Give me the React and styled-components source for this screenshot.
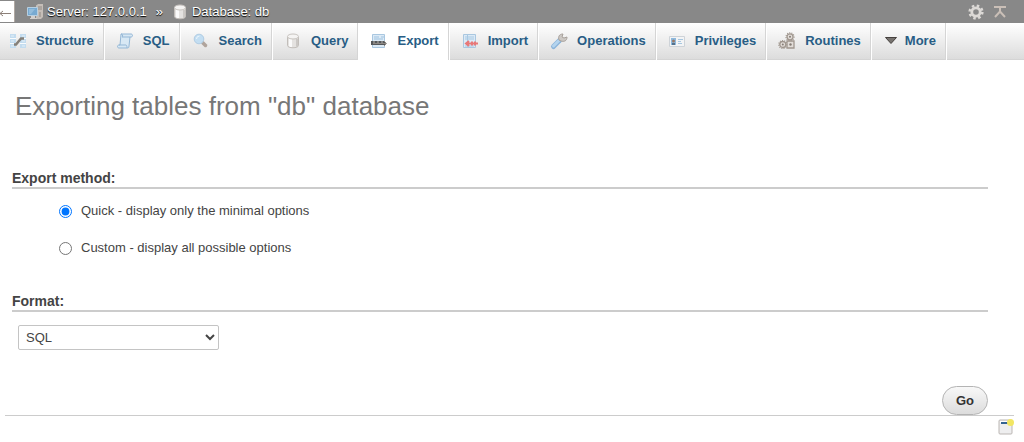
import React, { useState } from 'react';
import styled, { createGlobalStyle } from 'styled-components';

const StructureIcon = () => (
    <Icon viewBox="0 0 16 16">
        <path d="M0 1h6v14H0zM10 1h6v14h-6z" fill="#c3dcef" />
        <path d="M0 5.500h6M0 10.500h6M10 5.500h6M10 10.500h6" stroke="#f8fbfd" />
        <path d="M1 3h3M1 8h3M1 13h3M12 3h3M12 8h3M12 13h3" stroke="#e4f0f8" />
        <path d="M4 11.500h2l5-6h3" fill="none" stroke="#858079" strokeWidth="2.500" />
    </Icon>
);

const SqlIcon = () => (
    <Icon viewBox="0 0 16 16">
        <path d="M4 1h10c2 0 2 3 0 3h-1l-1 9c0 2-1 2-2 2H2c-2 0-2-3 0-3h1z" fill="#d8e8f4" stroke="#94b7d6" />
        <path d="M4 1c2 0 2 3 1 3h8M2 12h7c1 0 1 3 1 3" fill="none" stroke="#94b7d6" />
    </Icon>
);

const SearchIcon = () => (
    <Icon viewBox="0 0 16 16">
        <path d="M9.500 9.500l3 3" stroke="#b0a49c" strokeWidth="3.500" strokeLinecap="round" />
        <circle cx="6" cy="6" r="4.800" fill="#c3def2" stroke="#b0cce3" />
        <path d="M3.500 6a3 3 0 0 1 3-3" fill="none" stroke="#eef7fd" />
    </Icon>
);

const DatabaseIcon = () => (
    <Icon viewBox="0 0 16 16">
        <path d="M2.500 4v8.500c0 3 11 3 11 0V4" fill="#e4e2e0" stroke="#c2beba" />
        <path d="M4 6h3v8H5l-1-1z" fill="#fafafa" />
        <path d="M11 6h2v7l-2 1z" fill="#cbc8c5" />
        <ellipse cx="8" cy="3.500" rx="5.500" ry="2.500" fill="#f5f4f3" stroke="#c8c4c0" />
    </Icon>
);

const ExportIcon = () => (
    <Icon viewBox="0 0 16 16">
        <path d="M1.500 1.500h12v13h-12z" fill="#dceaf6" stroke="#a9c7e0" />
        <path d="M3 4h5M10 4h3M3 6h9" stroke="#9fc3e0" />
        <path d="M0 8h14v4H0z" fill="#55585b" />
        <path d="M2 10.500h13M13 8l2.500 2.500L13 13" fill="none" stroke="#8d8883" />
        <path d="M2 9h2M6 9h2M10 9h2" stroke="#b7b4b1" />
    </Icon>
);

const ImportIcon = () => (
    <Icon viewBox="0 0 16 16">
        <path d="M1.500 1.500h12v13h-12z" fill="#dceaf6" stroke="#a9c7e0" />
        <path d="M3 4h2M6 4h6M3 6h2M6 6h6M3 13h9M5.500 2v12" stroke="#a8c9e3" />
        <path d="M4 10.500h12M7 8l-3 2.500L7 13M10 8.500v4M13 8.500v4" fill="none" stroke="#e87878" strokeWidth="2" />
    </Icon>
);

const OperationsIcon = () => (
    <Icon viewBox="0 0 16 16">
        <path d="M2.500 13.500l6-6" stroke="#8bb4da" strokeWidth="5" strokeLinecap="round" />
        <path d="M2.500 13l6-6" stroke="#b4d4ee" strokeWidth="3" strokeLinecap="round" />
        <path d="M8 7c-1-3 0-6 4-6l-1 3 2 1 3-1c0 4-3 5-6 4z" fill="#ccc8c4" stroke="#a8a19b" />
    </Icon>
);

const PrivilegesIcon = () => (
    <Icon viewBox="0 0 16 16">
        <path d="M.5 3.500h15v10H.5z" fill="#f3f4f5" stroke="#ced3d8" />
        <path d="M2 5h5v7H2z" fill="#8db9de" />
        <path d="M3 12v-2h3v2z" fill="#54718c" />
        <circle cx="4.500" cy="8" r="1.500" fill="#9a7966" />
        <path d="M9 6.500h5M9 8.500h3M9 10.500h4" stroke="#a7c7e0" />
    </Icon>
);

const RoutinesIcon = () => (
    <Icon viewBox="0 0 16 16">
        <g fill="#e2ddd9" stroke="#a0978f" strokeWidth="1.300">
            <circle cx="11" cy="3.800" r="3" />
            <circle cx="3.800" cy="11.500" r="3" />
            <path d="M8 8h7v7H8z" />
        </g>
        <g fill="none" stroke="#a0978f" strokeWidth="1.200" strokeDasharray="1 1.200">
            <circle cx="11" cy="3.800" r="4" />
            <circle cx="3.800" cy="11.500" r="4" />
        </g>
        <g fill="#857c75">
            <circle cx="11" cy="3.800" r="1" />
            <circle cx="3.800" cy="11.500" r="1" />
            <circle cx="11.500" cy="11.500" r="1.200" />
        </g>
    </Icon>
);

const MoreIcon = () => (
    <Icon viewBox="0 0 16 16">
        <path d="M1.500 4.500h11l-5.500 6z" fill="#77736f" stroke="#45413e" />
    </Icon>
);

const ServerIcon = () => (
    <Icon viewBox="0 0 16 16">
        <path d="M9 1.500l2-1.500h5v13l-2 2H9z" fill="#c5beb8" />
        <path d="M11 3h4M11 5h4M13 8v5" stroke="#918a84" />
        <path d="M.5 3.500h10v8H.5z" fill="#78aad1" stroke="#b7cfe1" />
        <path d="M2 5h6l-4 5H2z" fill="#94bddc" />
        <path d="M4 12h4v2h2v1H3v-1h1z" fill="#d3cfcc" />
    </Icon>
);

const GearIcon = () => (
    <Icon viewBox="0 0 16 16">
        <circle cx="8" cy="8" r="6.300" fill="none" stroke="#dcd9d6" strokeWidth="2.600" strokeDasharray="2.474 2.474" />
        <circle cx="8" cy="8" r="4.200" fill="none" stroke="#dcd9d6" strokeWidth="2.800" />
    </Icon>
);

const CollapseIcon = () => (
    <Icon viewBox="0 0 16 16">
        <path d="M2 3h12M3 13l5-5.500 5 5.500M8 7V4" fill="none" stroke="#cabfb7" strokeWidth="2" />
    </Icon>
);

const WindowIcon = () => (
    <Icon viewBox="0 0 16 16">
        <rect x="1" y="1" width="13" height="14" rx="1" fill="#eeeeef" stroke="#bbb6b3" />
        <path d="M2 2h11v2H2z" fill="#fff" />
        <path d="M3 4h9" stroke="#346391" strokeWidth="2" />
        <circle cx="12.500" cy="3.500" r="3.500" fill="#f2e663" />
    </Icon>
);

const tabs = [
    { name: 'Structure', icon: StructureIcon },
    { name: 'SQL', icon: SqlIcon },
    { name: 'Search', icon: SearchIcon },
    { name: 'Query', icon: DatabaseIcon },
    { name: 'Export', icon: ExportIcon },
    { name: 'Import', icon: ImportIcon },
    { name: 'Operations', icon: OperationsIcon },
    { name: 'Privileges', icon: PrivilegesIcon },
    { name: 'Routines', icon: RoutinesIcon },
    { name: 'More', icon: MoreIcon, compact: true },
];

const App = () => {
    const [method, setMethod] = useState('quick');
    const [format, setFormat] = useState('sql');

    return (
        <>
            <GlobalStyle />
            <ServerBar>
                <BackButton type="button" aria-label="Hide navigation">
                    <svg width="14" height="20" viewBox="0 0 14 20">
                        <path d="M0 11.500h11M3 9l-3 2.500L3 14" fill="none" stroke="#8c8078" />
                    </svg>
                </BackButton>
                <Crumb href="#server"><ServerIcon />Server: 127.0.0.1</Crumb>
                <Separator>»</Separator>
                <Crumb href="#database"><DatabaseIcon />Database: db</Crumb>
                <BarTools>
                    <IconButton type="button" aria-label="Page settings"><GearIcon /></IconButton>
                    <IconButton type="button" aria-label="Scroll to top"><CollapseIcon /></IconButton>
                </BarTools>
            </ServerBar>
            <TabBar>
                {tabs.map(({ name, icon: TabIcon, compact }) => (
                    <Tab key={name} href={`#${name.toLowerCase()}`} $active={name === 'Export'} $compact={compact}>
                        <TabIcon />
                        {name}
                    </Tab>
                ))}
            </TabBar>
            <Form onSubmit={(e) => e.preventDefault()}>
                <Title>Exporting tables from "db" database</Title>
                <Section>
                    <Legend>Export method:</Legend>
                    <Options>
                        <Option>
                            <Radio
                                name="method"
                                checked={method === 'quick'}
                                onChange={() => setMethod('quick')}
                            />
                            Quick - display only the minimal options
                        </Option>
                        <Option>
                            <Radio
                                name="method"
                                checked={method === 'custom'}
                                onChange={() => setMethod('custom')}
                            />
                            Custom - display all possible options
                        </Option>
                    </Options>
                </Section>
                <Section>
                    <Legend id="format-label">Format:</Legend>
                    <Select
                        aria-labelledby="format-label"
                        value={format}
                        onChange={(e) => setFormat(e.target.value)}
                    >
                        <option value="sql">SQL</option>
                    </Select>
                </Section>
                <Actions>
                    <GoButton type="submit">Go</GoButton>
                </Actions>
            </Form>
            <Footer>
                <IconButton type="button" aria-label="Open new window"><WindowIcon /></IconButton>
            </Footer>
        </>
    );
};

const GlobalStyle = createGlobalStyle`
* { box-sizing: border-box; }
body {
    margin: 0;
    background: #fff;
    color: #444;
    font: 13px/16px "Liberation Sans", Arial, sans-serif;
}
button, select { font: inherit; color: inherit; }
`;

const Icon = styled.svg`
width: 16px;
height: 16px;
flex: none;
display: block;
overflow: visible;
`;

const ServerBar = styled.header`
display: flex;
align-items: center;
height: 23px;
padding-right: 16px;
background: #888;
color: #fff;
`;

const BackButton = styled.button`
width: 15px;
height: 21px;
margin-right: 12px;
padding: 0;
border: 0;
border-right: 1px solid #b0a8a2;
background: #fff;
svg { display: block; }
`;

const Crumb = styled.a`
display: flex;
align-items: center;
gap: 4px;
color: #fff;
text-decoration: none;
text-shadow: 0 1px 1px #000;
`;

const Separator = styled.span`
margin: 0 9px;
text-shadow: 0 1px 1px #000;
`;

const BarTools = styled.div`
display: flex;
gap: 8px;
margin-left: auto;
`;

const IconButton = styled.button`
padding: 0;
border: 0;
background: none;
`;

const TabBar = styled.nav`
display: flex;
height: 37px;
background: linear-gradient(#fff, #dcdcdc);
border-bottom: 1px solid #d4d4d4;
`;

const Tab = styled.a`
display: flex;
align-items: center;
gap: ${({ $compact }) => ($compact ? 5 : 10)}px;
height: 37px;
padding: 0 10px 2px 12px;
border-right: 1px solid #fff;
box-shadow: inset -1px 0 #d5d5d5;
background: ${({ $active }) => ($active ? '#fff' : 'none')};
color: #285d85;
font-weight: bold;
text-decoration: none;
&:first-child { padding-left: 10px; }
`;

const Form = styled.form`
padding: 32px 36px 0 12px;
`;

const Title = styled.h1`
margin: 0 0 50px 3px;
color: #777;
font-size: 26px;
font-weight: normal;
line-height: 28px;
`;

const Section = styled.section`
margin-bottom: 36px;
`;

const Legend = styled.h2`
margin: 0;
padding-bottom: 1px;
border-bottom: 2px solid #ccc;
color: #444;
font-size: 14px;
line-height: 16px;
`;

const Options = styled.div`
display: flex;
flex-direction: column;
align-items: flex-start;
gap: 21px;
padding: 14px 0 1px 47px;
`;

const Option = styled.label`
display: flex;
align-items: center;
gap: 9px;
`;

const Radio = styled.input.attrs({ type: 'radio' })`
width: 13px;
height: 13px;
margin: 0;
accent-color: #0075ff;
`;

const Select = styled.select`
width: 201px;
height: 25px;
margin: 13px 0 0 6px;
padding: 0 3px;
border: 1px solid #c4c4c4;
border-radius: 2px;
background: #fff;
`;

const Actions = styled.div`
display: flex;
justify-content: flex-end;
`;

const GoButton = styled.button`
height: 29px;
padding: 0 13px;
border: 1px solid #b4b4b4;
border-radius: 15px;
background: linear-gradient(#f8f8f8, #dcdcdc);
color: #333;
font-weight: bold;
`;

const Footer = styled.footer`
display: flex;
justify-content: flex-end;
margin: 0 10px 0 5px;
padding-top: 3px;
border-top: 1px solid #ccc;
`;

export default App;
